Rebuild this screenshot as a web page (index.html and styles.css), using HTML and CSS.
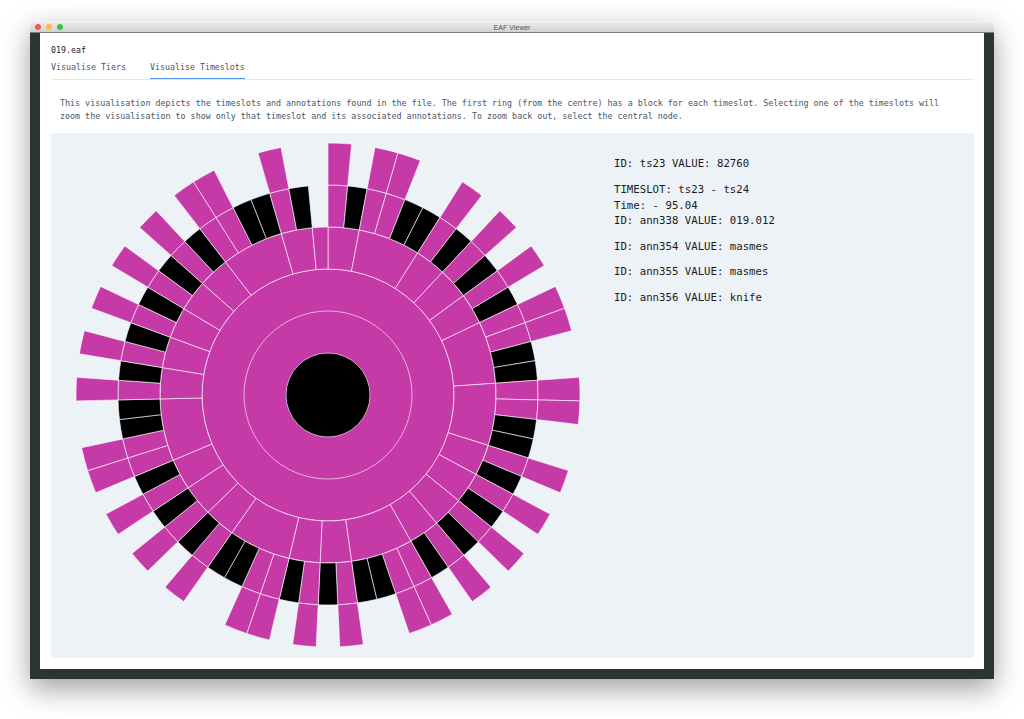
FILE: index.html
```html
<!DOCTYPE html>
<html lang="en">

<head>
    <meta charset="UTF-8">
    <title>EAF Viewer</title>
    <link rel="stylesheet" href="styles.css">
</head>

<body>
    <div class="window">
        <div class="titlebar">
            <div class="lights">
                <span class="light light-red"></span>
                <span class="light light-yellow"></span>
                <span class="light light-green"></span>
            </div>
            <div class="title">EAF Viewer</div>
        </div>
        <div class="frame">
            <div class="content">
                <div class="filename">019.eaf</div>
                <div class="tabs">
                    <div class="tab">Visualise Tiers</div>
                    <div class="tab tab-active">Visualise Timeslots</div>
                </div>
                <p class="intro">This visualisation depicts the timeslots and annotations found in the file. The first ring (from the centre) has a block for each timeslot. Selecting one of the timeslots will zoom the visualisation to show only that timeslot and its associated annotations. To zoom back out, select the central node.</p>
                <div class="panel">
                    <svg id="sunburst" class="sunburst" viewBox="-277 -262 554 524"></svg>
                    <div class="details">
                        <p>ID: ts23 VALUE: 82760</p>
                        <p>TIMESLOT: ts23 - ts24<br>Time: - 95.04<br>ID: ann338 VALUE: 019.012</p>
                        <p>ID: ann354 VALUE: masmes</p>
                        <p>ID: ann355 VALUE: masmes</p>
                        <p>ID: ann356 VALUE: knife</p>
                    </div>
                </div>
            </div>
        </div>
    </div>

    <script src="script.js"></script>
</body>

</html>
```

FILE: styles.css
```css
* {
    margin: 0;
    padding: 0;
    box-sizing: border-box;
}

body {
    height: 100vh;
    padding: 21px 30px 0;
    background-color: #fff;
    font-family: "DejaVu Sans Mono", "Liberation Mono", monospace;
    overflow: hidden;
}

.window {
    width: 964px;
    height: 658px;
    display: flex;
    flex-direction: column;
    border-radius: 3px 3px 0 0;
    box-shadow: 0 10px 28px rgba(0, 0, 0, 0.38);
}

.titlebar {
    height: 12px;
    position: relative;
    display: flex;
    align-items: center;
    justify-content: center;
    background: linear-gradient(#ececec, #d2d2d2);
    border-top: 1px solid #f4f4f4;
    border-bottom: 1px solid #7d7d7d;
    border-radius: 3px 3px 0 0;
}

.lights {
    position: absolute;
    left: 5px;
    top: 2px;
    display: flex;
    gap: 5px;
}

.light {
    width: 6px;
    height: 6px;
    border-radius: 50%;
}

.light-red {
    background-color: #fc5753;
}

.light-yellow {
    background-color: #fdbc40;
}

.light-green {
    background-color: #33c748;
}

.title {
    font-family: "Liberation Sans", sans-serif;
    font-size: 7px;
    color: #555;
}

.frame {
    flex: 1;
    padding: 0 10px 10px;
    background-color: #2d3436;
}

.content {
    height: 100%;
    display: flex;
    flex-direction: column;
    padding: 12px 10px 11px 11px;
    background-color: #fff;
    color: #2d3748;
    font-size: 8.3px;
}

.filename {
    height: 10px;
    line-height: 10px;
    color: #1a202c;
}

.tabs {
    display: flex;
    gap: 24px;
    margin-top: 3px;
    border-bottom: 1px solid #e2e8f0;
}

.tab {
    height: 21px;
    line-height: 18px;
    color: #4a5568;
}

.tab-active {
    margin-bottom: -1px;
    border-bottom: 1px solid #4f94ef;
}

.intro {
    margin-top: 17px;
    padding: 0 30px 0 9px;
    font-size: 8.36px;
    line-height: 12.5px;
    color: #4a5568;
}

.panel {
    flex: 1;
    display: flex;
    margin-top: 11px;
    background-color: #edf2f7;
    border-radius: 2px;
}

.sunburst {
    width: 554px;
    height: 524px;
    flex: none;
}

.sunburst path,
.sunburst circle {
    stroke: #fff;
    stroke-width: 0.7;
    stroke-opacity: 0.85;
}

.magenta {
    fill: #c63aa8;
}

.black {
    fill: #000;
}

.details {
    padding: 23.4px 0 0 9px;
    font-size: 10.7px;
    line-height: 15.8px;
    color: #1a1a1a;
}

.details p {
    margin-bottom: 9.6px;
}
```

FILE: script.js
```js
// number of leaves under each block of the third ring, clockwise from the top
const groups = [2, 4, 2, 2, 2, 4, 4, 2, 2, 2, 2, 4, 2, 2, 4, 2, 2, 2, 4, 2, 2, 2, 2, 2, 4, 2, 1]
const total = groups.reduce((a, b) => a + b, 0)
const ringWidth = 42
const svg = document.querySelector('#sunburst')

function point(r, unit) {
    const angle = unit / total * Math.PI * 2
    return `${(r * Math.sin(angle)).toFixed(2)} ${(-r * Math.cos(angle)).toFixed(2)}`
}

function addShape(tag, attrs) {
    const el = document.createElementNS('http://www.w3.org/2000/svg', tag)
    Object.keys(attrs).forEach(key => el.setAttribute(key, attrs[key]))
    svg.appendChild(el)
}

function addBlock(ring, from, to, color) {
    const inner = ring * ringWidth
    const outer = inner + ringWidth
    const d = `M${point(inner, from)} A${inner} ${inner} 0 0 1 ${point(inner, to)} `
        + `L${point(outer, to)} A${outer} ${outer} 0 0 0 ${point(outer, from)} Z`
    addShape('path', { d: d, class: color })
}

// the two full rings and the centre, biggest first so they stack
addShape('circle', { r: ringWidth * 3, class: 'magenta' })
addShape('circle', { r: ringWidth * 2, class: 'magenta' })
addShape('circle', { r: ringWidth, class: 'black' })

let start = 0
groups.forEach(size => {
    addBlock(3, start, start + size, 'magenta')
    if (size > 1) {
        // first half of the leaves carry an annotation, second half are empty
        for (let i = 0; i < size; i++) {
            const from = start + i
            if (i < size / 2) {
                addBlock(4, from, from + 1, 'magenta')
                addBlock(5, from, from + 1, 'magenta')
            } else {
                addBlock(4, from, from + 1, 'black')
            }
        }
    }
    start += size
})
```
